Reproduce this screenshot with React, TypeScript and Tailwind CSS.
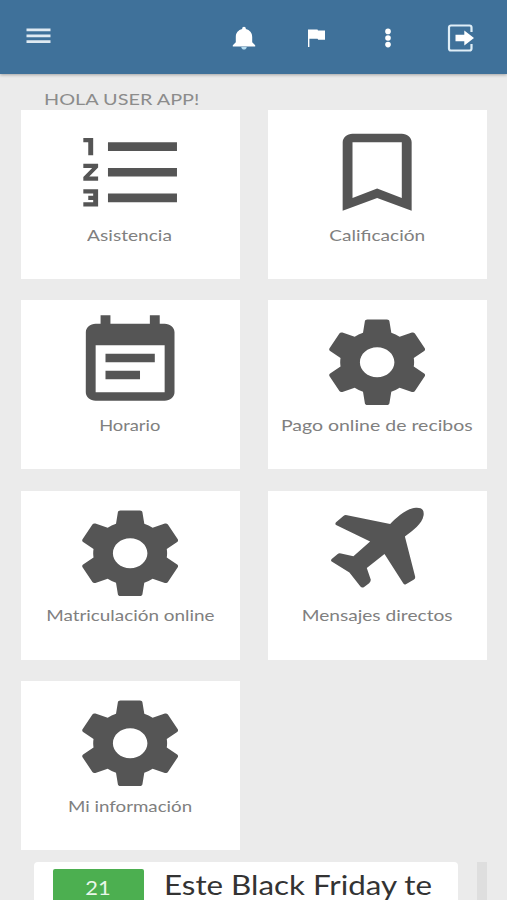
import type { ReactNode } from 'react';

const SETTINGS_PATH =
  'M19.43 12.98c.04-.32.07-.64.07-.98s-.03-.66-.07-.98l2.11-1.65c.19-.15.24-.42.12-.64l-2-3.46c-.12-.22-.39-.3-.61-.22l-2.49 1c-.52-.4-1.08-.73-1.69-.98l-.38-2.65C14.46 2.18 14.25 2 14 2h-4c-.25 0-.46.18-.49.42l-.38 2.65c-.61.25-1.17.59-1.69.98l-2.49-1c-.23-.09-.49 0-.61.22l-2 3.46c-.13.22-.07.49.12.64l2.11 1.65c-.04.32-.07.65-.07.98s.03.66.07.98l-2.11 1.65c-.19.15-.24.42-.12.64l2 3.46c.12.22.39.3.61.22l2.49-1c.52.4 1.08.73 1.69.98l.38 2.65c.03.24.24.42.49.42h4c.25 0 .46-.18.49-.42l.38-2.65c.61-.25 1.17-.59 1.69-.98l2.49 1c.23.09.49 0 .61-.22l2-3.46c.12-.22.07-.49-.12-.64l-2.11-1.65zM12 15.5c-1.93 0-3.5-1.57-3.5-3.5s1.57-3.5 3.5-3.5 3.5 1.57 3.5 3.5-1.57 3.5-3.5 3.5z';
const LIST_PATH =
  'M2 17h2v.5H3v1h1v.5H2v1h3v-4H2v1zm1-9h1V4H2v1h1v3zm-1 3h1.8L2 13.1v.9h3v-1H3.2L5 10.9V10H2v1zm5-6v2h14V5H7zm0 14h14v-2H7v2zm0-6h14v-2H7v2z';
const BOOKMARK_PATH =
  'M17 3H7c-1.1 0-1.99.9-1.99 2L5 21l7-3 7 3V5c0-1.1-.9-2-2-2zm0 15l-5-2.18L7 18V5h10v13z';
const EVENT_PATH =
  'M17 10H7v2h10v-2zm2-7h-1V1h-2v2H8V1H6v2H5c-1.11 0-1.99.9-1.99 2L3 19c0 1.1.89 2 2 2h14c1.1 0 2-.9 2-2V5c0-1.1-.9-2-2-2zm0 16H5V8h14v11zm-5-5H7v2h7v-2z';
const PLANE_PATH =
  'M385 118C400 103 430 72 462 69C480 68 487 76 485 92C481 118 452 138 429 156L460 277Q460 283 455 286L432 299Q427 301 424 296L368 208L315 250L327 286Q327 292 322 296L306 308Q300 311 296 306L263 264L210 231Q206 227 210 223L228 208Q232 205 238 207L275 215L325 171L223 121Q219 117 223 113L245 94Q250 90 256 92Z';

const tiles = [
  { label: 'Asistencia', viewBox: '-0.5 0 24 24', path: LIST_PATH, text: 'scale-x-[1.195]' },
  { label: 'Calificación', viewBox: '0 0 24 24', path: BOOKMARK_PATH, text: 'scale-x-[1.19]' },
  { label: 'Horario', viewBox: '0 0 24 24', path: EVENT_PATH, text: 'scale-x-[1.145]' },
  { label: 'Pago online de recibos', viewBox: '0 0 24 24', path: SETTINGS_PATH, text: 'scale-x-[1.217]' },
  { label: 'Matriculación online', viewBox: '0 0 24 24', path: SETTINGS_PATH, text: 'scale-x-[1.18]' },
  { label: 'Mensajes directos', viewBox: '169 52 354 308', path: PLANE_PATH, text: 'scale-x-[1.195]' },
  { label: 'Mi información', viewBox: '0 0 24 24', path: SETTINGS_PATH, text: 'scale-x-[1.17]' },
];

function IconButton({ label, className, children }: { label: string; className: string; children: ReactNode }) {
  return (
    <button aria-label={label} className={`shrink-0 ${className}`}>
      {children}
    </button>
  );
}

function Header() {
  return (
    <header className="relative flex h-[74px] shrink-0 items-center bg-[#3f719a] pt-0.5 pl-[26px] shadow-[0_1px_3px_rgba(0,0,0,0.3)]">
      <IconButton label="Menu" className="mr-auto pb-1">
        <svg width="25" height="16" viewBox="0 0 25 16" fill="#dfeaf2">
          <path d="M.5.5h24v2.8H.5zM.5 6.4h24v2.8H.5zM.5 12.2h24V15H.5z" />
        </svg>
      </IconButton>
      <IconButton label="Notificaciones" className="mr-[51px]">
        <svg width="24" height="24" viewBox="0 0 24 24" fill="#fff">
          <path d="M12 .8c1 0 1.8.8 1.8 1.8v.5c4 1 6.4 3.9 6.4 7.9v5.2l3 3v1.2H.8v-1.2l3-3V11c0-4 2.4-6.9 6.4-7.9v-.5c0-1 .8-1.8 1.8-1.8z" />
          <path d="M9.3 21h5.4c0 1.500-1.200 2.600-2.700 2.600S9.300 22.500 9.300 21z" fill="#b5dcf0" />
        </svg>
      </IconButton>
      <IconButton label="Avisos" className="mr-[58px]">
        <svg width="19" height="20" viewBox="0 0 19 20" fill="#fff">
          <path d="M1 1.5h9.5l.5.9h7v9.400h-6.800l-.6-1.100H2.400V19H1z" />
        </svg>
      </IconButton>
      <IconButton label="Opciones" className="mr-[55px]">
        <svg width="8" height="20" viewBox="0 0 8 20" fill="#fff">
          <circle cx="4" cy="3.4" r="2.8" />
          <circle cx="4" cy="10" r="2.8" />
          <circle cx="4" cy="16.6" r="2.8" />
        </svg>
      </IconButton>
      <IconButton label="Salir" className="mr-[32px]">
        <svg width="28" height="28" viewBox="0 0 28 28" fill="none">
          <path
            d="M24.500 8V3.500a2 2 0 0 0-2-2H4a2 2 0 0 0-2 2v21a2 2 0 0 0 2 2h18.500a2 2 0 0 0 2-2V20"
            stroke="#dfeef7"
            strokeWidth="2.2"
          />
          <path d="M8.500 10.800h8.800V6.500l9.700 7.500-9.700 7.500v-4.300H8.500z" fill="#fff" />
        </svg>
      </IconButton>
    </header>
  );
}

export default function App() {
  return (
    <div className="flex h-[900px] w-full flex-col overflow-hidden bg-[#ebebeb] font-['Lato','Liberation_Sans',sans-serif]">
      <Header />

      <main className="flex flex-col">
        <h1 className="flex h-9 items-end pb-px pl-11 text-base leading-[21px] whitespace-nowrap text-[#8c8c8c]">
          <span className="origin-left scale-x-[1.24]">HOLA USER APP!</span>
        </h1>

        <div className="grid grid-cols-[219px_219px] gap-x-7 gap-y-[21.4px] pl-[20.5px]">
          {tiles.map((tile) => (
            <section key={tile.label} className="flex h-[169px] flex-col items-center bg-white pt-[11px]">
              <svg width="118.3" height="102.5" viewBox={tile.viewBox} preserveAspectRatio="none" fill="#555">
                <path d={tile.path} />
              </svg>
              <span className={`text-base leading-[22.6px] whitespace-nowrap text-[#808080] ${tile.text}`}>
                {tile.label}
              </span>
            </section>
          ))}
        </div>

        {/* News */}
        <div className="mt-3 flex h-20 pl-[34px]">
          <article className="flex w-[424px] items-start rounded-t-sm bg-white pt-[7px] pl-[19px]">
            <div className="flex h-16 w-[91px] justify-center rounded-xs bg-[#4caf50] pt-[7px] text-[19px] leading-6 text-[#e9f7e9]">
              <span className="scale-x-[1.15]">21</span>
            </div>
            <h2 className="ml-5 text-[26px] leading-8 whitespace-nowrap text-[#333]">
              <span className="inline-block origin-left scale-x-[1.205]">Este Black Friday te</span>
            </h2>
          </article>
          <div className="ml-[19px] w-[10px] bg-[#dedede]" />
        </div>
      </main>
    </div>
  );
}
